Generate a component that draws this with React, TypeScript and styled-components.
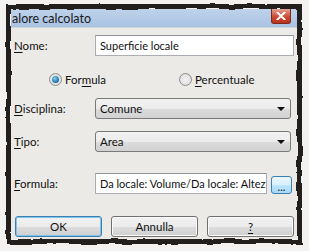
import React from "react";
import styled, { createGlobalStyle } from "styled-components";

const Global = createGlobalStyle`
  html, body { margin: 0; padding: 0; }
  body {
    background: #f3f2f0;
    width: 309px;
    height: 251px;
    overflow: hidden;
    font-family: "Lato", "Noto Sans", sans-serif;
  }
`;

const Frame = styled.div`
  position: relative;
  margin: 6px 0 0 8px;
  width: 292px;
  height: 236px;
  box-sizing: border-box;
  padding: 3px;
  display: flex;
  flex-direction: column;
`;

const TornEdge = styled.div`
  position: absolute;
  inset: -2px;
  border: 5px solid #231f1c;
  pointer-events: none;
  filter: url(#torn);
`;

const Window = styled.div`
  flex: 1;
  display: flex;
  flex-direction: column;
  background: #eceae7;
  overflow: hidden;
`;

const TitleBar = styled.div`
  height: 18px;
  display: flex;
  align-items: center;
  justify-content: space-between;
  background: linear-gradient(#bfd2ea, #a9c2e2);
  border-bottom: 1px solid #cdd6e0;
`;

const Title = styled.span`
  font-size: 12.5px;
  color: #1a1a1a;
  margin-top: 1px;
  padding-left: 1px;
`;

const CloseBtn = styled.div`
  width: 18px;
  height: 14px;
  margin-right: 6px;
  margin-top: -4px;
  border-radius: 0 0 3px 3px;
  background: linear-gradient(#e3a293, #cc4a34 55%, #b8321d);
  border: 1px solid #7a2a1e;
  border-top: none;
  display: flex;
  align-items: center;
  justify-content: center;
`;

const Body = styled.div`
  flex: 1;
  display: flex;
  flex-direction: column;
  padding: 7px 3px 0 3px;
`;

const Row = styled.div<{ $mt: number }>`
  display: flex;
  align-items: center;
  height: 21px;
  margin-top: ${(p) => p.$mt}px;
`;

const Label = styled.span`
  width: 81px;
  font-size: 11.5px;
  color: #111;
  flex-shrink: 0;
`;

const U = styled.span`
  text-decoration: underline;
  text-underline-offset: 2px;
`;

const TextInput = styled.div`
  flex: 1;
  min-width: 0;
  height: 21px;
  box-sizing: border-box;
  background: #fff;
  border: 1px solid #abadb3;
  border-top-color: #8f949c;
  font-size: 11px;
  color: #111;
  padding-left: 4px;
  display: flex;
  align-items: center;
  white-space: nowrap;
  overflow: hidden;
`;

const Select = styled.div`
  flex: 1;
  height: 21px;
  box-sizing: border-box;
  margin-right: 3px;
  border: 1px solid #7a7a7a;
  border-radius: 3px;
  background: linear-gradient(#f3f3f3 0%, #ebebeb 50%, #dcdcdc 51%, #d2d2d2 100%);
  display: flex;
  align-items: center;
  justify-content: space-between;
  padding: 0 5px 0 4px;
  font-size: 11.5px;
  color: #111;
`;

const Arrow = styled.span`
  width: 0;
  height: 0;
  border-left: 4px solid transparent;
  border-right: 4px solid transparent;
  border-top: 4px solid #111;
`;

const RadioRow = styled.div`
  display: flex;
  align-items: center;
  height: 16px;
  margin-top: 15px;
  padding-left: 35px;
`;

const RadioItem = styled.div<{ $w?: number }>`
  display: flex;
  align-items: center;
  gap: 3px;
  width: ${(p) => (p.$w ? `${p.$w}px` : "auto")};
  font-size: 11.5px;
  color: #111;
`;

const RadioCircle = styled.span<{ $on: boolean }>`
  width: 13px;
  height: 13px;
  box-sizing: border-box;
  border-radius: 50%;
  border: 1px solid #8e8f8f;
  background: radial-gradient(circle, #f4f4f4, #d6d6d6);
  display: flex;
  align-items: center;
  justify-content: center;
  &::after {
    content: "";
    display: ${(p) => (p.$on ? "block" : "none")};
    width: 7px;
    height: 7px;
    border-radius: 50%;
    background: radial-gradient(circle at 40% 35%, #7dd0f0, #1c6fa8 70%, #0d4f80);
  }
`;

const DotsBtn = styled.div`
  width: 21px;
  height: 18px;
  flex-shrink: 0;
  box-sizing: border-box;
  margin: 2px 2px 0 4px;
  border: 1px solid #3c7fb1;
  border-radius: 3px;
  background: linear-gradient(#eaf6fd, #d9f0fc 50%, #bee6fd 51%, #a7d9f5);
  display: flex;
  align-items: flex-end;
  justify-content: center;
  font-size: 11px;
  line-height: 13px;
  color: #111;
`;

const ButtonRow = styled.div`
  display: flex;
  gap: 9px;
  margin-top: 22px;
  padding-left: 1px;
`;

const Button = styled.div<{ $default?: boolean }>`
  width: 87px;
  height: 21px;
  box-sizing: border-box;
  border: 1px solid ${(p) => (p.$default ? "#3c7fb1" : "#707070")};
  border-radius: 3px;
  background: linear-gradient(#f2f2f2 0%, #ebebeb 50%, #dddddd 51%, #cfcfcf 100%);
  box-shadow: ${(p) => (p.$default ? "inset 0 0 0 1px #7fc4ec" : "inset 0 0 0 1px #fbfbfb")};
  display: flex;
  align-items: center;
  justify-content: center;
  font-size: 11.5px;
  color: #111;
`;

const HiddenSvg = styled.svg`
  position: absolute;
  width: 0;
  height: 0;
`;

export default function App() {
  return (
    <>
      <Global />
      <HiddenSvg aria-hidden="true">
        <filter id="torn" x="-5%" y="-5%" width="110%" height="110%" colorInterpolationFilters="sRGB">
          <feTurbulence type="fractalNoise" baseFrequency="0.06" numOctaves="3" seed="3" result="noise" />
          <feDisplacementMap in="SourceGraphic" in2="noise" scale="3.5" xChannelSelector="R" yChannelSelector="G" />
        </filter>
      </HiddenSvg>
      <Frame>
        <Window>
          <TitleBar>
            <Title>alore calcolato</Title>
            <CloseBtn>
              <svg width="10" height="8" viewBox="0 0 10 8">
                <path d="M1.5 0.5 L8.5 7.5 M8.5 0.5 L1.5 7.5" stroke="#fff" strokeWidth="2" strokeLinecap="square" />
              </svg>
            </CloseBtn>
          </TitleBar>
          <Body>
            <Row $mt={0}>
              <Label>
                <U>N</U>ome:
              </Label>
              <TextInput>Superficie locale</TextInput>
            </Row>
            <RadioRow>
              <RadioItem $w={130}>
                <RadioCircle $on />
                <span>
                  For<U>m</U>ula
                </span>
              </RadioItem>
              <RadioItem>
                <RadioCircle $on={false} />
                <span>
                  <U>P</U>ercentuale
                </span>
              </RadioItem>
            </RadioRow>
            <Row $mt={11}>
              <Label>
                <U>D</U>isciplina:
              </Label>
              <Select>
                <span>Comune</span>
                <Arrow />
              </Select>
            </Row>
            <Row $mt={12}>
              <Label>
                <U>T</U>ipo:
              </Label>
              <Select>
                <span>Area</span>
                <Arrow />
              </Select>
            </Row>
            <Row $mt={21}>
              <Label>
                <U>F</U>ormula:
              </Label>
              <TextInput>Da locale: Volume/Da locale: Altez</TextInput>
              <DotsBtn>...</DotsBtn>
            </Row>
            <ButtonRow>
              <Button $default>OK</Button>
              <Button>Annulla</Button>
              <Button>
                <U>?</U>
              </Button>
            </ButtonRow>
          </Body>
        </Window>
        <TornEdge />
      </Frame>
    </>
  );
}
